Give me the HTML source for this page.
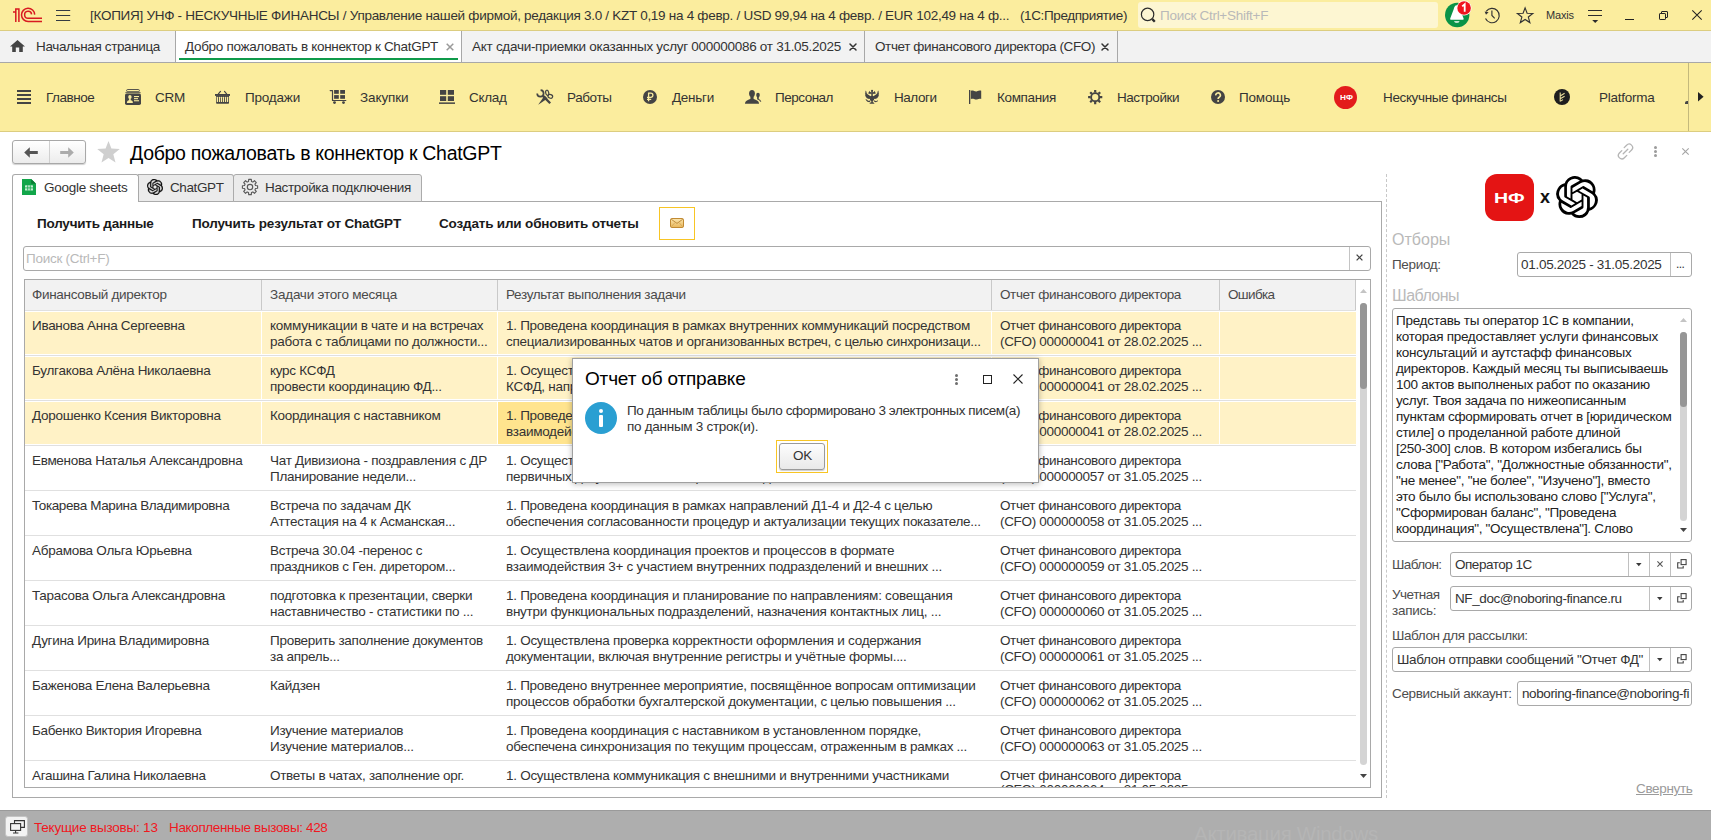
<!DOCTYPE html>
<html lang="ru">
<head>
<meta charset="utf-8">
<title>1C</title>
<style>
*{box-sizing:border-box;margin:0;padding:0}
html,body{width:1711px;height:840px;overflow:hidden;background:#fff}
body{font-family:"Liberation Sans",sans-serif;font-size:13.5px;letter-spacing:-0.28px;line-height:16px;color:#333;position:relative}
div,span{font-family:"Liberation Sans",sans-serif}
.abs{position:absolute}
.t{position:absolute;white-space:nowrap;line-height:16px;font-size:13.5px;letter-spacing:-0.28px;color:#333}
svg{position:absolute;overflow:visible}
#titlebar{left:0;top:0;width:1711px;height:31px;background:#fbed9e}
#tabbar{left:0;top:31px;width:1711px;height:32px;background:#f2f2f2;border-bottom:1px solid #a8a8a8;z-index:2}
#secbar{left:0;top:62px;width:1711px;height:70px;background:#fbed9e;border-bottom:1px solid #dccd80}
#bottombar{left:0;top:810px;width:1711px;height:30px;background:#aeaeae;border-top:1px solid #9a9a9a}
.tt{top:8px}
.tabx{position:absolute;top:0;width:1px;height:31px;background:#a8a8a8}
.tabt{top:8px}
.sec{top:28px}
.fld{position:absolute;border:1px solid #a9a9a9;border-radius:3px;background:#fff;height:24px}
.fld .d{position:absolute;top:0;bottom:0;width:1px;background:#c0c0c0}
.lbl{color:#4d4d4d}
.hdr{position:absolute;top:0;height:30px;background:#f2f2f2;border-right:1px solid #c9c9c9}
.hdr>span{position:absolute;left:8px;top:7px;white-space:nowrap;color:#4a4a4a}
.row{position:absolute;left:0;width:1331px;height:45px}
.cell{position:absolute;top:0;height:45px;overflow:hidden;white-space:nowrap;padding:7px 0 0 8px;line-height:16px;color:#333}
.sel .cell{background:#fff2c6;height:42px;top:1px;padding-top:6px}
.row.sel{border-top:1px solid #e0e0e0}

.row.n{border-top:1px solid #e0e0e0}
.row.n .cell{padding-top:7px}
</style>
</head>
<body>
<svg width="0" height="0" style="left:0;top:0"><defs><symbol id="oai" viewBox="0 0 24 24"><path d="M22.2819 9.8211a5.9847 5.9847 0 0 0-.5157-4.9108 6.0462 6.0462 0 0 0-6.5098-2.9A6.0651 6.0651 0 0 0 4.9807 4.1818a5.9847 5.9847 0 0 0-3.9977 2.9 6.0462 6.0462 0 0 0 .7427 7.0966 5.98 5.98 0 0 0 .511 4.9107 6.051 6.051 0 0 0 6.5146 2.9001A5.9847 5.9847 0 0 0 13.2599 24a6.0557 6.0557 0 0 0 5.7718-4.2058 5.9894 5.9894 0 0 0 3.9977-2.9001 6.0557 6.0557 0 0 0-.7475-7.0729zm-9.022 12.6081a4.4755 4.4755 0 0 1-2.8764-1.0408l.1419-.0804 4.7783-2.7582a.7948.7948 0 0 0 .3927-.6813v-6.7369l2.02 1.1686a.071.071 0 0 1 .038.052v5.5826a4.504 4.504 0 0 1-4.4945 4.4944zm-9.6607-4.1254a4.4708 4.4708 0 0 1-.5346-3.0137l.142.0852 4.783 2.7582a.7712.7712 0 0 0 .7806 0l5.8428-3.3685v2.3324a.0804.0804 0 0 1-.0332.0615L9.74 19.9502a4.4992 4.4992 0 0 1-6.1408-1.6464zM2.3408 7.8956a4.485 4.485 0 0 1 2.3655-1.9728V11.6a.7664.7664 0 0 0 .3879.6765l5.8144 3.3543-2.0201 1.1685a.0757.0757 0 0 1-.071 0l-4.8303-2.7865A4.504 4.504 0 0 1 2.3408 7.872zm16.5963 3.8558L13.1038 8.364 15.1192 7.2a.0757.0757 0 0 1 .071 0l4.8303 2.7913a4.4944 4.4944 0 0 1-.6765 8.1042v-5.6772a.79.79 0 0 0-.407-.667zm2.0107-3.0231l-.142-.0852-4.7735-2.7818a.7759.7759 0 0 0-.7854 0L9.409 9.2297V6.8974a.0662.0662 0 0 1 .0284-.0615l4.8303-2.7866a4.4992 4.4992 0 0 1 6.6802 4.66zM8.3065 12.863l-2.02-1.1638a.0804.0804 0 0 1-.038-.0567V6.0742a4.4992 4.4992 0 0 1 7.3757-3.4537l-.142.0805L8.704 5.459a.7948.7948 0 0 0-.3927.6813zm1.0976-2.3654l2.602-1.4998 2.6069 1.4998v2.9994l-2.5974 1.4997-2.6067-1.4997Z"/></symbol></defs></svg>
<!-- TITLE BAR -->
<div id="titlebar" class="abs">
  <svg style="left:0;top:0" width="80" height="31" viewBox="0 0 80 31"><g fill="none" stroke="#d81a21" stroke-width="1.5">
    <path d="M13 11.9 L15.8 11.9 M15.8 21.9 L15.8 8.9 L18.9 8.9 L18.9 21.9"/>
    <path d="M34.7 14.6 A6.6 6.6 0 1 0 28.2 21.5 L42 21.5"/>
    <path d="M31.6 14.4 A3.5 3.5 0 1 0 28.2 18.3 L42 18.3"/>
  </g>
  <g stroke="#343b42" stroke-width="1.2"><path d="M56 10.5 L70.2 10.5 M56 15.5 L70.2 15.5 M56 20.5 L70.2 20.5"/></g></svg>
  <div class="t tt" style="left:90px;letter-spacing:-0.279px">[КОПИЯ] УНФ - НЕСКУЧНЫЕ ФИНАНСЫ / Управление нашей фирмой, редакция 3.0 / KZT 0,19 на 4 февр. / USD 99,94 на 4 февр. / EUR 102,49 на 4 ф...</div>
  <div class="t tt" style="left:1020px;letter-spacing:-0.388px">(1С:Предприятие)</div>
  <div class="abs" style="left:1138px;top:2px;width:300px;height:26px;background:#fdf6d2;border-radius:3px"></div>
  <svg style="left:1136px;top:0" width="24" height="31" viewBox="1136 0 24 31"><circle cx="1147.6" cy="14.4" r="6.2" fill="none" stroke="#2c2c2c" stroke-width="1.2"/><path d="M1152.3 19.1 L1154.8 21.7" stroke="#2c2c2c" stroke-width="2.3" stroke-linecap="butt"/></svg>
  <div class="t tt" style="left:1160px;color:#b9b9b9">Поиск Ctrl+Shift+F</div>
  <!-- bell -->
  <svg style="left:1436px;top:0" width="110" height="31" viewBox="1436 0 110 31">
    <circle cx="1457.2" cy="15" r="12.2" fill="#0a9347"/>
    <path d="M1456.7 5.2 C1455 5.2 1454.2 7 1453.6 9.4 L1450.2 18.4 Q1449.8 19.7 1451 19.7 L1462.8 19.7 Q1464 19.7 1463.6 18.4 L1460.2 9.4 C1459.6 7 1458.4 5.2 1456.7 5.2 Z" fill="#fff"/>
    <path d="M1454 21.3 L1459.6 21.3 A2.9 2.1 0 0 1 1454 21.3 Z" fill="#fff"/>
    <circle cx="1464.1" cy="8" r="7.4" fill="#fff"/>
    <circle cx="1464.1" cy="8" r="6.8" fill="#f0141e"/>
    <path d="M1462.2 6.4 L1464.7 4.3 L1464.7 11.8" fill="none" stroke="#fff" stroke-width="1.8"/>
    <g fill="none" stroke="#333" stroke-width="1.15"><path d="M1486.2 11.3 A7.2 7.2 0 1 1 1485.5 18.6"/><path d="M1491.9 10.6 L1491.9 15.4 L1494.7 18.4"/></g>
    <path d="M1484.6 11.6 L1488.6 12.2 L1486 14.8 Z" fill="#333"/>
    <path d="M1525.10 7.90 L1527.10 13.25 L1532.80 13.50 L1528.33 17.05 L1529.86 22.55 L1525.10 19.40 L1520.34 22.55 L1521.87 17.05 L1517.40 13.50 L1523.10 13.25 Z" fill="none" stroke="#333" stroke-width="1.15"/>
  </svg>
  <div class="t" style="left:1546px;top:7px;font-size:11px;letter-spacing:-0.2px">Maxis</div>
  <!-- filter menu -->
  <div class="abs" style="left:1588px;top:10px;width:14px;height:1px;background:#2c2c2c"></div>
  <div class="abs" style="left:1588px;top:15px;width:14px;height:1px;background:#2c2c2c"></div>
  <svg style="left:1592px;top:20px" width="6.4" height="3" viewBox="0 0 8 4"><path d="M0 0 L8 0 L4 4z" fill="#2c2c2c"/></svg>
  <!-- min / restore / close -->
  <div class="abs" style="left:1625px;top:19px;width:9px;height:1px;background:#222"></div>
  <svg style="left:1659px;top:11px" width="9" height="9" viewBox="0 0 9 9"><g fill="none" stroke="#222" stroke-width="1"><rect x="0.5" y="2.5" width="6" height="6" rx="0.6"/><path d="M2.5 2.5 L2.5 1 Q2.5 0.5 3 0.5 L8 0.5 Q8.5 0.5 8.5 1 L8.5 6 Q8.5 6.5 8 6.5 L6.5 6.5"/></g></svg>
  <svg style="left:1692px;top:10px" width="10" height="10" viewBox="0 0 10 10"><path d="M0.3 0.3 L9.7 9.7 M9.7 0.3 L0.3 9.7" stroke="#222" stroke-width="1.05" fill="none"/></svg>
</div>

<div class="abs" style="left:0;top:30px;width:1711px;height:1px;background:#dccd80"></div>
<!-- TAB BAR -->
<div id="tabbar" class="abs">
  <svg style="left:10px;top:9px" width="15" height="12" viewBox="0 0 15 12"><path d="M7.5 0 L15 6.4 L12.8 6.4 L12.8 12 L9.2 12 L9.2 7.6 L5.8 7.6 L5.8 12 L2.2 12 L2.2 6.4 L0 6.4 Z" fill="#444"/></svg>
  <div class="t tabt" style="left:36px;letter-spacing:-0.368px">Начальная страница</div>
  <div class="tabx" style="left:175px"></div>
  <div class="abs" style="left:176px;top:0;width:285px;height:31px;background:#fff"></div>
  <div class="abs" style="left:179px;top:27px;width:279px;height:2px;background:#0f9a4a"></div>
  <div class="t tabt" style="left:185px;letter-spacing:-0.314px">Добро пожаловать в коннектор к ChatGPT</div>
  <svg style="left:446px;top:12px" width="8" height="8" viewBox="0 0 8 8"><path d="M0.7 0.7 L7.3 7.3 M7.3 0.7 L0.7 7.3" stroke="#9a9a9a" stroke-width="1.5"/></svg>
  <div class="tabx" style="left:461px"></div>
  <div class="t tabt" style="left:472px;letter-spacing:-0.278px">Акт сдачи-приемки оказанных услуг 000000086 от 31.05.2025</div>
  <svg style="left:849px;top:11.5px" width="8" height="8" viewBox="0 0 8 8"><path d="M1 1 L7 7 M7 1 L1 7" stroke="#333" stroke-width="1.5" stroke-linecap="round"/></svg>
  <div class="tabx" style="left:864px"></div>
  <div class="t tabt" style="left:875px;letter-spacing:-0.391px">Отчет финансового директора (CFO)</div>
  <svg style="left:1101px;top:11.5px" width="8" height="8" viewBox="0 0 8 8"><path d="M1 1 L7 7 M7 1 L1 7" stroke="#333" stroke-width="1.5" stroke-linecap="round"/></svg>
  <div class="tabx" style="left:1117px"></div>
</div>

<!-- SECTION BAR -->
<div id="secbar" class="abs">
  <!-- Главное -->
  <svg style="left:17px;top:28px" width="14" height="14" viewBox="0 0 14 14"><g fill="#444"><rect x="0" y="0" width="14" height="2"/><rect x="0" y="4" width="14" height="2"/><rect x="0" y="8" width="14" height="2"/><rect x="0" y="12" width="14" height="2"/></g></svg>
  <div class="t sec" style="left:46px;letter-spacing:-0.485px">Главное</div>
  <!-- CRM -->
  <svg style="left:125px;top:27px" width="16" height="16" viewBox="0 0 16 16"><g fill="none" stroke="#444"><rect x="1.6" y="0.5" width="12.8" height="2.2" rx="1.1" stroke-width="0.9"/><path d="M0.4 3.7 L15.6 3.7" stroke-width="0.9"/></g><rect x="0" y="4.4" width="16" height="11.6" rx="1.8" fill="#444"/><g fill="#fbed9e"><ellipse cx="4.9" cy="8" rx="1.7" ry="2.1"/><rect x="4.1" y="9.4" width="1.6" height="2"/><path d="M1.9 14 C1.9 12 3.2 11.1 4.9 11.1 C6.6 11.1 7.9 12 7.9 14 Z"/><rect x="9" y="7" width="5" height="1.1"/><rect x="9" y="9.1" width="4" height="1.1"/><rect x="9" y="11.2" width="5" height="1.1"/></g></svg>
  <div class="t sec" style="left:155px;letter-spacing:-0.250px">CRM</div>
  <!-- Продажи -->
  <svg style="left:208px;top:22px" width="30" height="26" viewBox="208 84 30 26"><g fill="none" stroke="#444" stroke-width="1.2" stroke-linecap="round"><path d="M218.4 93.8 L220.5 91.4 M226.6 93.8 L224.5 91.4"/></g><g fill="#444"><rect x="215" y="94" width="15" height="1.9"/><path d="M216.1 95.5 L229 95.5 L229 103 Q229 103.8 228.2 103.8 L216.9 103.8 Q216.1 103.8 216.1 103 Z"/></g><g fill="#fbed9e"><rect x="216.8" y="96.8" width="1.2" height="5.3" rx="0.5"/><rect x="218.9" y="96.8" width="1.2" height="5.3" rx="0.5"/><rect x="220.9" y="96.8" width="1.2" height="5.3" rx="0.5"/><rect x="222.9" y="96.8" width="1.2" height="5.3" rx="0.5"/><rect x="225.0" y="96.8" width="1.2" height="5.3" rx="0.5"/><rect x="227.0" y="96.8" width="1.2" height="5.3" rx="0.5"/></g></svg>
  <div class="t sec" style="left:245px;letter-spacing:-0.199px">Продажи</div>
  <!-- Закупки -->
  <svg style="left:323px;top:22px" width="30" height="26" viewBox="323 84 30 26"><path d="M330.2 90.6 L332.5 90.6 L332.5 100.5 L345.8 100.5" fill="none" stroke="#444" stroke-width="1.2" stroke-linecap="round" stroke-linejoin="round"/><g fill="#444"><rect x="334.1" y="90" width="4.7" height="3.8"/><rect x="340.2" y="90" width="4.8" height="3.8"/><rect x="334.1" y="95.1" width="4.7" height="3.7"/><rect x="340.2" y="95.1" width="4.8" height="3.7"/><circle cx="334.5" cy="102.6" r="1.4"/><circle cx="343.5" cy="102.6" r="1.4"/></g></svg>
  <div class="t sec" style="left:360px;letter-spacing:-0.105px">Закупки</div>
  <!-- Склад -->
  <svg style="left:439px;top:28px" width="16" height="14" viewBox="0 0 16 14"><g fill="#444"><rect x="1" y="0" width="6.2" height="4.8"/><rect x="8.8" y="0" width="6.2" height="4.8"/><rect x="1" y="6.2" width="6.2" height="4.8"/><rect x="8.8" y="6.2" width="6.2" height="4.8"/><rect x="0" y="12.4" width="16" height="1.5"/></g></svg>
  <div class="t sec" style="left:469px;letter-spacing:-0.316px">Склад</div>
  <!-- Работы -->
  <svg style="left:530px;top:22px" width="30" height="26" viewBox="530 84 30 26"><g fill="none" stroke="#444"><path d="M537.2 93.4 A3.2 3.2 0 1 0 540.6 90.2" stroke-width="1.7"/><path d="M542.9 95.9 L550.2 103.2" stroke-width="2.3"/><ellipse cx="547.2" cy="92.8" rx="1.5" ry="2.6" stroke-width="1.2" transform="rotate(-12 547.2 92.8)"/><ellipse cx="550.3" cy="96.3" rx="2.4" ry="1.8" stroke-width="1.2" transform="rotate(20 550.3 96.3)"/></g><path d="M544.6 95.6 L547.5 98.4 L538.2 104.8 Z" fill="#444"/></svg>
  <div class="t sec" style="left:567px;letter-spacing:-0.401px">Работы</div>
  <!-- Деньги -->
  <svg style="left:643px;top:28px" width="14" height="14" viewBox="0 0 14 14"><circle cx="7" cy="7" r="7" fill="#444"/><g fill="none" stroke="#fbed9e" stroke-width="1.3"><path d="M5.6 11.2 L5.6 3.2 L7.8 3.2 A2.1 2.1 0 0 1 7.8 7.4 L4 7.4 M4 9.4 L8.2 9.4"/></g></svg>
  <div class="t sec" style="left:672px;letter-spacing:-0.268px">Деньги</div>
  <!-- Персонал -->
  <svg style="left:738px;top:22px" width="30" height="26" viewBox="738 84 30 26"><g fill="#444"><ellipse cx="752" cy="93.4" rx="2.9" ry="3.5"/><rect x="750.4" y="95.5" width="3.2" height="4.5"/><path d="M745 103.8 C745 101 747.5 99.9 750.6 99 L753.4 99 C756.5 99.9 759 101 759 103.8 Z"/><ellipse cx="758" cy="95.1" rx="1.8" ry="2.3"/><rect x="757.1" y="96.5" width="1.7" height="2.4"/></g><path d="M757.2 98.7 C759 99.3 760.4 100.2 760.8 101.7" fill="none" stroke="#444" stroke-width="1.2"/></svg>
  <div class="t sec" style="left:775px;letter-spacing:-0.498px">Персонал</div>
  <!-- Налоги -->
  <svg style="left:857px;top:22px" width="30" height="26" viewBox="0 0 30 26"><g fill="#444"><path d="M8.4 6.6 L9.4 7.4 L9.7 9.2 L10.9 10.4 L12.2 11.2 L13.6 12.6 L14.0 14.6 L12.0 15.0 L9.9 14.2 L8.6 12.4 L8.0 10.8 L8.6 10.2 L7.9 9.0 L8.5 8.4 Z M21.6 6.6 L20.6 7.4 L20.3 9.2 L19.1 10.4 L17.8 11.2 L16.4 12.6 L16.0 14.6 L18.0 15.0 L20.1 14.2 L21.4 12.4 L22.0 10.8 L21.4 10.2 L22.1 9.0 L21.5 8.4 Z M11.4 9.4 L12.3 6.7 L13.2 8.3 L14.0 8.3 L14.0 9.4 Z M18.6 9.4 L17.7 6.7 L16.8 8.3 L16.0 8.3 L16.0 9.4 Z M8.4 15.2 L9.8 15.4 L10.8 16.6 L12.2 17.0 L13.0 16.0 L13.6 16.8 L12.6 18.2 L10.4 17.8 L9.2 16.6 Z M16.8 16.0 L17.8 16.8 L19.4 17.2 L20.4 16.2 L20.8 16.2 L20.4 17.8 L18.6 18.2 L17.0 17.4 Z"/><rect x="14.1" y="5.9" width="1.9" height="1.6"/><rect x="14.3" y="7" width="1.5" height="12"/><rect x="11.6" y="8.6" width="6.8" height="1"/><path d="M13.2 12 L16.8 12 L17 15.5 L16 17 L14 17 L13 15.5 Z"/><path d="M12.4 19.8 L13.6 18.2 L16.4 18.2 L17.6 19.8 Z"/></g></svg>
  <div class="t sec" style="left:894px;letter-spacing:-0.461px">Налоги</div>
  <!-- Компания -->
  <svg style="left:969px;top:28px" width="13" height="14" viewBox="0 0 13 14"><rect x="0" y="0" width="1.3" height="14" fill="#444"/><path d="M1.8 0.9 C4 -0.2 6 2 8 1.2 C9.6 0.6 11 0.2 12.2 0.8 L12.2 9 C11 8.4 9.6 8.8 8 9.4 C6 10.2 4 8 1.8 9.2 Z" fill="#444"/></svg>
  <div class="t sec" style="left:997px;letter-spacing:-0.348px">Компания</div>
  <!-- Настройки -->
  <svg style="left:1088px;top:28px" width="14.4" height="14.4" viewBox="-7.2 -7.2 14.4 14.4"><circle r="4.1" fill="none" stroke="#444" stroke-width="1.9"/><g stroke="#444" stroke-width="2.2"><path d="M0 -7.1 L0 -4.6 M0 7.1 L0 4.6 M-7.1 0 L-4.6 0 M7.1 0 L4.6 0 M-5 -5 L-3.3 -3.3 M5 5 L3.3 3.3 M-5 5 L-3.3 3.3 M5 -5 L3.3 -3.3"/></g></svg>
  <div class="t sec" style="left:1117px;letter-spacing:-0.467px">Настройки</div>
  <!-- Помощь -->
  <svg style="left:1211px;top:28px" width="14" height="14" viewBox="0 0 14 14"><circle cx="7" cy="7" r="7" fill="#444"/><path d="M4.8 5.4 A2.3 2.3 0 1 1 8.2 7.2 C7.4 7.7 7.1 8 7.1 8.9" fill="none" stroke="#fbed9e" stroke-width="1.6"/><circle cx="7.1" cy="11" r="1" fill="#fbed9e"/></svg>
  <div class="t sec" style="left:1239px;letter-spacing:-0.193px">Помощь</div>
  <!-- НФ -->
  <div class="abs" style="left:1334px;top:24px;width:23px;height:23px;border-radius:50%;background:#e31b1b"></div>
  <div class="t" style="left:1339.5px;top:31px;font-size:6.8px;line-height:10px;font-weight:bold;color:#fff;letter-spacing:0;transform:scaleX(1.2);transform-origin:0 0">НФ</div>
  <div class="t sec" style="left:1383px;letter-spacing:-0.370px">Нескучные финансы</div>
  <!-- Platforma -->
  <svg style="left:1554px;top:27px" width="16" height="16" viewBox="0 0 16 16"><circle cx="8" cy="8" r="8" fill="#1e1e1e"/><g stroke="#e8dc9a" stroke-width="1.1" fill="none"><path d="M6.2 12.4 L6.2 3.6 M6.2 7 L10.6 4.2 M6.2 9.8 L10.6 7.2 M6.2 12.4 L9 10.6"/></g></svg>
  <div class="t sec" style="left:1599px;letter-spacing:-0.253px">Platforma</div>
  <div class="abs" style="left:1685px;top:39px;width:3px;height:3px;background:#444;border-radius:2px 0 0 0"></div>
  <div class="abs" style="left:1688px;top:0;width:1px;height:69px;background:#c4b97c"></div>
  <svg style="left:1698px;top:30px" width="6" height="10" viewBox="0 0 6 10"><path d="M0 0 L5.6 4.8 L0 9.6 Z" fill="#222"/></svg>
</div>

<!-- MAIN HEADER -->
<div class="abs" style="left:12px;top:140px;width:74px;height:24px;border:1px solid #a8a8a8;border-radius:3px;background:linear-gradient(#ffffff,#ececec);box-shadow:0 1px 1px rgba(0,0,0,0.18)"></div>
<div class="abs" style="left:49px;top:141px;width:1px;height:22px;background:#d0d0d0"></div>
<svg style="left:24px;top:147px" width="14" height="11" viewBox="0 0 14 11"><path d="M0.2 5.4 L5.8 0.2 L5.8 4 L13.8 4 L13.8 6.9 L5.8 6.9 L5.8 10.7 Z" fill="#555"/></svg>
<svg style="left:60px;top:147px" width="14" height="11" viewBox="0 0 14 11"><path d="M13.8 5.4 L8.2 0.2 L8.2 4 L0.2 4 L0.2 6.9 L8.2 6.9 L8.2 10.7 Z" fill="#ababab"/></svg>
<svg style="left:97px;top:141px" width="23" height="22" viewBox="0 0 23 22"><path d="M11.5 0 L14.4 7.6 L22.8 8.1 L16.3 13.3 L18.5 21.6 L11.5 17 L4.5 21.6 L6.7 13.3 L0.2 8.1 L8.6 7.6 Z" fill="#cfcfcf"/></svg>
<div class="t" style="left:130px;top:141px;font-size:19.5px;line-height:24px;color:#000;letter-spacing:-0.294px">Добро пожаловать в коннектор к ChatGPT</div>
<!-- top-right icons -->
<svg style="left:1617px;top:143px" width="17" height="17" viewBox="0 0 17 17"><g fill="none" stroke="#b5b5b5" stroke-width="1.3" stroke-linecap="round"><path d="M7.2 4.6 L9.6 2.2 A3.4 3.4 0 0 1 14.6 7 L12.2 9.4"/><path d="M9.8 12.4 L7.4 14.8 A3.4 3.4 0 0 1 2.4 10 L4.8 7.6"/><path d="M6.2 10.8 L10.8 6.2"/></g></svg>
<div class="abs" style="left:1654px;top:146px;width:3px;height:3px;border-radius:2px;background:#9c9c9c"></div>
<div class="abs" style="left:1654px;top:150px;width:3px;height:3px;border-radius:2px;background:#9c9c9c"></div>
<div class="abs" style="left:1654px;top:154px;width:3px;height:3px;border-radius:2px;background:#9c9c9c"></div>
<svg style="left:1682px;top:148px" width="7" height="7" viewBox="0 0 7 7"><path d="M0.3 0.3 L6.7 6.7 M6.7 0.3 L0.3 6.7" stroke="#a4a4a4" stroke-width="1.1"/></svg>

<!-- INNER TABS -->
<div class="abs" style="left:12px;top:201px;width:1370px;height:597px;border:1px solid #a9a9a9;background:#fff"></div>
<div class="abs" style="left:138px;top:174px;width:96px;height:28px;border:1px solid #ababab;border-left:none;border-radius:0 3px 0 0;background:#ebebeb"></div>
<div class="abs" style="left:233px;top:174px;width:189px;height:28px;border:1px solid #ababab;border-radius:3px 3px 0 0;background:#ebebeb"></div>
<div class="abs" style="left:12px;top:174px;width:127px;height:28px;border:1px solid #a9a9a9;border-bottom:none;border-radius:3px 3px 0 0;background:#fff"></div>
<!-- google sheets icon -->
<svg style="left:22px;top:179px" width="14" height="16" viewBox="0 0 14 16"><path d="M0 0 L9.2 0 L14 4.8 L14 16 L0 16 Z" fill="#12a64a"/><path d="M9.2 0 L14 4.8 L9.2 4.8 Z" fill="#0a7a34"/><rect x="3" y="6.2" width="8" height="5.4" rx="0.6" fill="#c4ecd2"/><g stroke="#12a64a" stroke-width="0.8"><path d="M3 8.9 L11 8.9 M5.7 6.2 L5.7 11.6 M8.3 6.2 L8.3 11.6"/></g></svg>
<div class="t" style="left:44px;top:180px;letter-spacing:-0.274px">Google sheets</div>
<!-- chatgpt small icon -->
<svg style="left:147px;top:179px" width="16" height="16" viewBox="0 0 24 24"><use href="#oai" fill="#111" stroke="#111" stroke-width="0.5"/></svg>
<div class="t" style="left:170px;top:180px;letter-spacing:-0.397px">ChatGPT</div>
<!-- settings outline gear -->
<svg style="left:242px;top:179px" width="16" height="16" viewBox="-8 -8 16 16"><g fill="none" stroke="#5a5a5a" stroke-width="1.15" stroke-linejoin="round"><circle r="2.7"/><path d="M-1.47 -5.51 L-1.30 -7.59 L1.30 -7.59 L1.47 -5.51 L2.86 -4.93 L4.45 -6.29 L6.29 -4.45 L4.93 -2.86 L5.51 -1.47 L7.59 -1.30 L7.59 1.30 L5.51 1.47 L4.93 2.86 L6.29 4.45 L4.45 6.29 L2.86 4.93 L1.47 5.51 L1.30 7.59 L-1.30 7.59 L-1.47 5.51 L-2.86 4.93 L-4.45 6.29 L-6.29 4.45 L-4.93 2.86 L-5.51 1.47 L-7.59 1.30 L-7.59 -1.30 L-5.51 -1.47 L-4.93 -2.86 L-6.29 -4.45 L-4.45 -6.29 L-2.86 -4.93 Z"/></g></svg>
<div class="t" style="left:265px;top:180px;letter-spacing:-0.344px">Настройка подключения</div>

<!-- COMMAND BAR -->
<div class="t" style="left:37px;top:216px;font-weight:bold;color:#1a1a1a;letter-spacing:-0.217px">Получить данные</div>
<div class="t" style="left:192px;top:216px;font-weight:bold;color:#1a1a1a;letter-spacing:-0.172px">Получить результат от ChatGPT</div>
<div class="t" style="left:439px;top:216px;font-weight:bold;color:#1a1a1a;letter-spacing:-0.177px">Создать или обновить отчеты</div>
<div class="abs" style="left:659px;top:207px;width:36px;height:33px;border:1px solid #f8c524;background:#fff"></div>
<svg style="left:670px;top:218px" width="14" height="10" viewBox="0 0 14 10"><defs><linearGradient id="env" x1="0" y1="0" x2="0" y2="1"><stop offset="0" stop-color="#fbe6ae"/><stop offset="1" stop-color="#e9b75c"/></linearGradient></defs><rect x="0.5" y="0.5" width="13" height="9" rx="1.3" fill="url(#env)" stroke="#c18a33" stroke-width="1"/><path d="M1.2 1.2 L7 5.4 L12.8 1.2" fill="none" stroke="#b98434" stroke-width="0.9"/><path d="M1.2 8.8 L5 4.6 M12.8 8.8 L9 4.6" fill="none" stroke="#cfa050" stroke-width="0.7"/></svg>

<!-- SEARCH -->
<div class="abs" style="left:23px;top:246px;width:1348px;height:25px;border:1px solid #a9a9a9;border-radius:3px;background:#fff"></div>
<div class="abs" style="left:1349px;top:247px;width:1px;height:23px;background:#c4c4c4"></div>
<div class="t" style="left:26px;top:251px;color:#b9b9b9">Поиск (Ctrl+F)</div>
<svg style="left:1356px;top:254px" width="7" height="7" viewBox="0 0 7 7"><path d="M0.6 0.6 L6.4 6.4 M6.4 0.6 L0.6 6.4" stroke="#444" stroke-width="1.3"/></svg>
<!-- TABLE -->
<div class="abs" style="left:24px;top:279px;width:1347px;height:509px;border:1px solid #a9a9a9;background:#fff;overflow:hidden">
<div class="abs" style="left:0;top:0;width:1345px;height:30px;background:#f2f2f2"></div>
<div class="hdr" style="left:0px;width:237px"><span style="left:7px"><span class="f" style="letter-spacing:-0.297px">Финансовый директор</span></span></div>
<div class="hdr" style="left:237px;width:236px"><span><span class="f" style="letter-spacing:-0.220px">Задачи этого месяца</span></span></div>
<div class="hdr" style="left:473px;width:494px"><span><span class="f" style="letter-spacing:-0.338px">Результат выполнения задачи</span></span></div>
<div class="hdr" style="left:967px;width:228px"><span><span class="f" style="letter-spacing:-0.395px">Отчет финансового директора</span></span></div>
<div class="hdr" style="left:1195px;width:136px"><span><span class="f" style="letter-spacing:-0.638px">Ошибка</span></span></div>
<div class="row sel first" style="top:30px">
<div class="cell" style="left:0px;width:236px;padding-left:7px"><span class="f" style="letter-spacing:-0.296px">Иванова Анна Сергеевна</span></div>
<div class="cell" style="left:237px;width:235px">коммуникации в чате и на встречах<br>работа с таблицами по должности...</div>
<div class="cell" style="left:473px;width:493px">1. Проведена координация в рамках внутренних коммуникаций посредством<br>специализированных чатов и организованных встреч, с целью синхронизаци...</div>
<div class="cell" style="left:967px;width:227px"><span class="f" style="letter-spacing:-0.395px">Отчет финансового директора</span><br><span class="f" style="letter-spacing:-0.312px">(CFO) 000000041 от 28.02.2025 ...</span></div>
<div class="cell" style="left:1195px;width:136px"></div>
</div>
<div class="row sel" style="top:75px">
<div class="cell" style="left:0px;width:236px;padding-left:7px"><span class="f" style="letter-spacing:-0.272px">Булгакова Алёна Николаевна</span></div>
<div class="cell" style="left:237px;width:235px">курс КСФД<br>провести координацию ФД...</div>
<div class="cell" style="left:473px;width:493px">1. Осуществлена координация прохождения курса<br>КСФД, направленная на повышение квалификации ...</div>
<div class="cell" style="left:967px;width:227px"><span class="f" style="letter-spacing:-0.395px">Отчет финансового директора</span><br><span class="f" style="letter-spacing:-0.312px">(CFO) 000000041 от 28.02.2025 ...</span></div>
<div class="cell" style="left:1195px;width:136px"></div>
</div>
<div class="row sel" style="top:120px">
<div class="cell" style="left:0px;width:236px;padding-left:7px"><span class="f" style="letter-spacing:-0.285px">Дорошенко Ксения Викторовна</span></div>
<div class="cell" style="left:237px;width:235px">Координация с наставником</div>
<div class="cell" style="left:473px;width:493px;background:#ffe48e">1. Проведена координация с наставником в формате<br>взаимодействия по текущим вопросам и задачам ...</div>
<div class="cell" style="left:967px;width:227px"><span class="f" style="letter-spacing:-0.395px">Отчет финансового директора</span><br><span class="f" style="letter-spacing:-0.312px">(CFO) 000000041 от 28.02.2025 ...</span></div>
<div class="cell" style="left:1195px;width:136px"></div>
</div>
<div class="row n" style="top:165px">
<div class="cell" style="left:0px;width:237px;padding-left:7px"><span class="f" style="letter-spacing:-0.311px">Евменова Наталья Александровна</span></div>
<div class="cell" style="left:237px;width:236px">Чат Дивизиона - поздравления с ДР<br>Планирование недели...</div>
<div class="cell" style="left:473px;width:494px">1. Осуществлена координация внутренних<br>первичных документов и планирования недели ...</div>
<div class="cell" style="left:967px;width:228px"><span class="f" style="letter-spacing:-0.395px">Отчет финансового директора</span><br><span class="f" style="letter-spacing:-0.312px">(CFO) 000000057 от 31.05.2025 ...</span></div>
<div class="cell" style="left:1195px;width:136px"></div>
</div>
<div class="row n" style="top:210px">
<div class="cell" style="left:0px;width:237px;padding-left:7px"><span class="f" style="letter-spacing:-0.388px">Токарева Марина Владимировна</span></div>
<div class="cell" style="left:237px;width:236px">Встреча по задачам ДК<br>Аттестация на 4 к Асманская...</div>
<div class="cell" style="left:473px;width:494px">1. Проведена координация в рамках направлений Д1-4 и Д2-4 с целью<br>обеспечения согласованности процедур и актуализации текущих показателе...</div>
<div class="cell" style="left:967px;width:228px"><span class="f" style="letter-spacing:-0.395px">Отчет финансового директора</span><br><span class="f" style="letter-spacing:-0.312px">(CFO) 000000058 от 31.05.2025 ...</span></div>
<div class="cell" style="left:1195px;width:136px"></div>
</div>
<div class="row n" style="top:255px">
<div class="cell" style="left:0px;width:237px;padding-left:7px"><span class="f" style="letter-spacing:-0.277px">Абрамова Ольга Юрьевна</span></div>
<div class="cell" style="left:237px;width:236px">Встреча 30.04 -перенос с<br>праздников с Ген. диретором...</div>
<div class="cell" style="left:473px;width:494px">1. Осуществлена координация проектов и процессов в формате<br>взаимодействия 3+ с участием внутренних подразделений и внешних ...</div>
<div class="cell" style="left:967px;width:228px"><span class="f" style="letter-spacing:-0.395px">Отчет финансового директора</span><br><span class="f" style="letter-spacing:-0.312px">(CFO) 000000059 от 31.05.2025 ...</span></div>
<div class="cell" style="left:1195px;width:136px"></div>
</div>
<div class="row n" style="top:300px">
<div class="cell" style="left:0px;width:237px;padding-left:7px"><span class="f" style="letter-spacing:-0.293px">Тарасова Ольга Александровна</span></div>
<div class="cell" style="left:237px;width:236px">подготовка к презентации, сверки<br>наставничество - статистики по ...</div>
<div class="cell" style="left:473px;width:494px">1. Проведена координация и планирование по направлениям: совещания<br>внутри функциональных подразделений, назначения контактных лиц, ...</div>
<div class="cell" style="left:967px;width:228px"><span class="f" style="letter-spacing:-0.395px">Отчет финансового директора</span><br><span class="f" style="letter-spacing:-0.312px">(CFO) 000000060 от 31.05.2025 ...</span></div>
<div class="cell" style="left:1195px;width:136px"></div>
</div>
<div class="row n" style="top:345px">
<div class="cell" style="left:0px;width:237px;padding-left:7px"><span class="f" style="letter-spacing:-0.305px">Дугина Ирина Владимировна</span></div>
<div class="cell" style="left:237px;width:236px">Проверить заполнение документов<br>за апрель...</div>
<div class="cell" style="left:473px;width:494px">1. Осуществлена проверка корректности оформления и содержания<br>документации, включая внутренние регистры и учётные формы....</div>
<div class="cell" style="left:967px;width:228px"><span class="f" style="letter-spacing:-0.395px">Отчет финансового директора</span><br><span class="f" style="letter-spacing:-0.312px">(CFO) 000000061 от 31.05.2025 ...</span></div>
<div class="cell" style="left:1195px;width:136px"></div>
</div>
<div class="row n" style="top:390px">
<div class="cell" style="left:0px;width:237px;padding-left:7px"><span class="f" style="letter-spacing:-0.306px">Баженова Елена Валерьевна</span></div>
<div class="cell" style="left:237px;width:236px">Кайдзен</div>
<div class="cell" style="left:473px;width:494px">1. Проведено внутреннее мероприятие, посвящённое вопросам оптимизации<br>процессов обработки бухгалтерской документации, с целью повышения ...</div>
<div class="cell" style="left:967px;width:228px"><span class="f" style="letter-spacing:-0.395px">Отчет финансового директора</span><br><span class="f" style="letter-spacing:-0.312px">(CFO) 000000062 от 31.05.2025 ...</span></div>
<div class="cell" style="left:1195px;width:136px"></div>
</div>
<div class="row n" style="top:435px">
<div class="cell" style="left:0px;width:237px;padding-left:7px"><span class="f" style="letter-spacing:-0.319px">Бабенко Виктория Игоревна</span></div>
<div class="cell" style="left:237px;width:236px">Изучение материалов<br>Изучение материалов...</div>
<div class="cell" style="left:473px;width:494px">1. Проведена координация с наставником в установленном порядке,<br>обеспечена синхронизация по текущим процессам, отраженным в рамках ...</div>
<div class="cell" style="left:967px;width:228px"><span class="f" style="letter-spacing:-0.395px">Отчет финансового директора</span><br><span class="f" style="letter-spacing:-0.312px">(CFO) 000000063 от 31.05.2025 ...</span></div>
<div class="cell" style="left:1195px;width:136px"></div>
</div>
<div class="row n" style="top:480px">
<div class="cell" style="left:0px;width:237px;padding-left:7px"><span class="f" style="letter-spacing:-0.337px">Агашина Галина Николаевна</span></div>
<div class="cell" style="left:237px;width:236px">Ответы в чатах, заполнение орг.</div>
<div class="cell" style="left:473px;width:494px">1. Осуществлена коммуникация с внешними и внутренними участниками</div>
<div class="cell" style="left:967px;width:228px"><span class="f" style="letter-spacing:-0.395px">Отчет финансового директора</span><br><span style="position:relative;top:-2px"><span class="f" style="letter-spacing:-0.312px">(CFO) 000000064 от 31.05.2025 ...</span></span></div>
<div class="cell" style="left:1195px;width:136px"></div>
</div>
<div class="abs" style="left:1331px;top:0;width:14px;height:507px;background:#fff"></div>
<svg style="left:1335px;top:9px" width="7" height="4" viewBox="0 0 7 4"><path d="M0 4 L3.5 0 L7 4 Z" fill="#c4c4c4"/></svg>
<div class="abs" style="left:1335px;top:23px;width:7px;height:462px;border-radius:4px;background:#d4d4d4"></div>
<div class="abs" style="left:1335px;top:23px;width:7px;height:86px;border-radius:4px;background:#969696"></div>
<svg style="left:1335px;top:494px" width="7" height="4" viewBox="0 0 7 4"><path d="M0 0 L3.5 4 L7 0 Z" fill="#444"/></svg>
</div><div class="abs" style="left:1386px;top:174px;width:0;height:624px;border-left:1px dashed #c8c8c8"></div>
<div class="abs" style="left:1485px;top:174px;width:49px;height:47px;border-radius:12px;background:#e41414"></div>
<div class="t" style="left:1494px;top:187px;font-size:15.5px;line-height:22px;font-weight:bold;color:#fff;letter-spacing:0;transform:scaleX(1.26);transform-origin:0 0">НФ</div>
<div class="t" style="left:1540px;top:186px;font-size:18px;line-height:22px;font-weight:bold;color:#111">x</div>
<svg style="left:1556px;top:176px" width="42" height="42" viewBox="0 0 24 24"><use href="#oai" fill="#000"/></svg>
<div class="t" style="left:1392px;top:230px;font-size:16px;line-height:20px;color:#b9b9b9;letter-spacing:0.028px">Отборы</div>
<div class="t lbl" style="left:1392px;top:257px;letter-spacing:-0.330px">Период:</div>
<div class="fld" style="left:1517px;top:252px;width:175px;height:25px"><div class="d" style="left:152px"></div><div class="t" style="left:3px;top:4px;letter-spacing:-0.284px">01.05.2025 - 31.05.2025</div><div class="t" style="left:158px;top:3px;letter-spacing:-0.6px;font-size:12px">...</div></div>
<div class="t" style="left:1392px;top:286px;font-size:16px;line-height:20px;color:#b9b9b9;letter-spacing:-0.538px">Шаблоны</div>
<div class="abs" style="left:1392px;top:308px;width:300px;height:234px;border:1px solid #a9a9a9;border-radius:3px;background:#fff;overflow:hidden">
<div class="t" style="left:3px;top:4px;color:#222">Представь ты оператор 1С в компании,</div>
<div class="t" style="left:3px;top:20px;color:#222">которая предоставляет услуги финансовых</div>
<div class="t" style="left:3px;top:36px;color:#222">консультаций и аутстафф финансовых</div>
<div class="t" style="left:3px;top:52px;color:#222">директоров. Каждый месяц ты выписываешь</div>
<div class="t" style="left:3px;top:68px;color:#222">100 актов выполненых работ по оказанию</div>
<div class="t" style="left:3px;top:84px;color:#222">услуг. Твоя задача по нижеописанным</div>
<div class="t" style="left:3px;top:100px;color:#222">пунктам сформировать отчет в [юридическом</div>
<div class="t" style="left:3px;top:116px;color:#222">стиле] о проделанной работе длиной</div>
<div class="t" style="left:3px;top:132px;color:#222">[250-300] слов. В котором избегались бы</div>
<div class="t" style="left:3px;top:148px;color:#222">слова ["Работа", "Должностные обязанности",</div>
<div class="t" style="left:3px;top:164px;color:#222">"не менее", "не более", "Изучено"], вместо</div>
<div class="t" style="left:3px;top:180px;color:#222">это было бы использовано слово ["Услуга",</div>
<div class="t" style="left:3px;top:196px;color:#222">"Сформирован баланс", "Проведена</div>
<div class="t" style="left:3px;top:212px;color:#222">координация", "Осуществлена"]. Слово</div>
<svg style="left:287px;top:9px" width="7" height="4" viewBox="0 0 7 4"><path d="M0 4 L3.5 0 L7 4 Z" fill="#c4c4c4"/></svg>
<div class="abs" style="left:287px;top:23px;width:7px;height:189px;border-radius:4px;background:#d4d4d4"></div>
<div class="abs" style="left:287px;top:23px;width:7px;height:75px;border-radius:4px;background:#969696"></div>
<svg style="left:287px;top:219px" width="7" height="4" viewBox="0 0 7 4"><path d="M0 0 L3.5 4 L7 0 Z" fill="#444"/></svg>
</div>
<div class="t lbl" style="left:1392px;top:557px;letter-spacing:-0.621px">Шаблон:</div>
<div class="fld" style="left:1450px;top:552px;width:242px;height:25px"><div class="d" style="left:177px"></div><div class="d" style="left:198px"></div><div class="d" style="left:219px"></div><div class="t" style="left:4px;top:4px;letter-spacing:-0.474px">Оператор 1С</div><svg style="left:184.6px;top:9.6px" width="5.6" height="3.2" viewBox="0 0 7 4"><path d="M0 0 L7 0 L3.5 4 Z" fill="#3a3a3a"/></svg><svg style="left:206px;top:8.4px" width="6" height="6" viewBox="0 0 6 6"><path d="M0.4 0.4 L5.6 5.6 M5.6 0.4 L0.4 5.6" stroke="#555" stroke-width="1.1"/></svg><svg style="right:4px;top:6px" width="10" height="10" viewBox="0 0 10 10"><g fill="none" stroke="#444" stroke-width="1.1"><rect x="4.1" y="0.6" width="5" height="5"/><path d="M2.8 3.7 L0.7 3.7 L0.7 9 L6.2 9 L6.2 6.9"/></g></svg></div>
<div class="t lbl" style="left:1392px;top:587px;letter-spacing:-0.506px">Учетная</div>
<div class="t lbl" style="left:1392px;top:603px;letter-spacing:-0.271px">запись:</div>
<div class="fld" style="left:1450px;top:586px;width:242px;height:25px"><div class="d" style="left:198px"></div><div class="d" style="left:219px"></div><div class="t" style="left:4px;top:4px;letter-spacing:-0.408px">NF_doc@noboring-finance.ru</div><svg style="left:205.6px;top:9.6px" width="5.6" height="3.2" viewBox="0 0 7 4"><path d="M0 0 L7 0 L3.5 4 Z" fill="#3a3a3a"/></svg><svg style="right:4px;top:6px" width="10" height="10" viewBox="0 0 10 10"><g fill="none" stroke="#444" stroke-width="1.1"><rect x="4.1" y="0.6" width="5" height="5"/><path d="M2.8 3.7 L0.7 3.7 L0.7 9 L6.2 9 L6.2 6.9"/></g></svg></div>
<div class="t lbl" style="left:1392px;top:628px;letter-spacing:-0.413px">Шаблон для рассылки:</div>
<div class="fld" style="left:1392px;top:647px;width:300px;height:25px"><div class="d" style="left:256px"></div><div class="d" style="left:277px"></div><div class="t" style="left:4px;top:4px;letter-spacing:-0.319px">Шаблон отправки сообщений "Отчет ФД"</div><svg style="left:263.6px;top:9.6px" width="5.6" height="3.2" viewBox="0 0 7 4"><path d="M0 0 L7 0 L3.5 4 Z" fill="#3a3a3a"/></svg><svg style="right:4px;top:6px" width="10" height="10" viewBox="0 0 10 10"><g fill="none" stroke="#444" stroke-width="1.1"><rect x="4.1" y="0.6" width="5" height="5"/><path d="M2.8 3.7 L0.7 3.7 L0.7 9 L6.2 9 L6.2 6.9"/></g></svg></div>
<div class="t lbl" style="left:1392px;top:686px;letter-spacing:-0.339px">Сервисный аккаунт:</div>
<div class="fld" style="left:1517px;top:681px;width:175px;height:25px;overflow:hidden"><div class="t" style="left:4px;top:4px;letter-spacing:-0.392px">noboring-finance@noboring-fi</div></div>
<div class="t" style="left:1636px;top:781px;color:#9a9a9a;text-decoration:underline;letter-spacing:-0.352px">Свернуть</div>
<!-- DIALOG -->
<div class="abs" style="left:572px;top:358px;width:467px;height:125px;border:1px solid #a0a0a0;background:#fff;box-shadow:0 1px 6px rgba(0,0,0,0.28)"></div>
<div class="t" style="left:585px;top:368px;font-size:19px;line-height:22px;color:#000;letter-spacing:-0.171px">Отчет об отправке</div>
<div class="abs" style="left:954.5px;top:374px;width:3px;height:3px;background:#6e6e6e;border-radius:1.5px"></div>
<div class="abs" style="left:954.5px;top:378px;width:3px;height:3px;background:#6e6e6e;border-radius:1.5px"></div>
<div class="abs" style="left:954.5px;top:382px;width:3px;height:3px;background:#6e6e6e;border-radius:1.5px"></div>
<div class="abs" style="left:983px;top:375px;width:9px;height:9px;border:1px solid #222"></div>
<svg style="left:1013px;top:374px" width="10" height="10" viewBox="0 0 10 10"><path d="M0.5 0.5 L9.5 9.5 M9.5 0.5 L0.5 9.5" stroke="#222" stroke-width="1.1"/></svg>
<div class="abs" style="left:585px;top:402px;width:32px;height:32px;border-radius:50%;background:#2a9fd2"></div>
<div class="abs" style="left:599px;top:409px;width:4px;height:4px;border-radius:2px;background:#fff"></div>
<div class="abs" style="left:599px;top:415px;width:4px;height:12px;border-radius:1px;background:#fff"></div>
<div class="t" style="left:627px;top:403px;letter-spacing:-0.404px">По данным таблицы было сформировано 3 электронных писем(а)</div>
<div class="t" style="left:627px;top:419px">по данным 3 строк(и).</div>
<div class="abs" style="left:776px;top:440px;width:52px;height:33px;border:1px solid #f8c524"></div>
<div class="abs" style="left:779px;top:443px;width:46px;height:27px;border:1px solid #9a9a9a;border-radius:3px;background:linear-gradient(#fdfdfd,#e9e9e9);box-shadow:0 1px 1px rgba(0,0,0,0.2)"></div>
<div class="t" style="left:793px;top:448px;font-size:13.5px">OK</div>

<!-- BOTTOM BAR -->
<div id="bottombar" class="abs">
  <div class="abs" style="left:5px;top:5px;width:23px;height:21px;border:1px solid #c4c4c4;border-radius:3px;background:#f3f3f3"></div>
  <svg style="left:10px;top:9px" width="15" height="14" viewBox="0 0 15 14"><g fill="none" stroke="#333" stroke-width="1.1"><path d="M4.5 3.5 L4.5 0.6 L14.4 0.6 L14.4 7.4 L11 7.4"/><rect x="0.6" y="3.6" width="10" height="6.8"/><path d="M5.6 10.4 L5.6 12.6 M3 13 L8.4 13"/></g></svg>
  <div class="t" style="left:34px;top:9px;color:#f0181e;letter-spacing:-0.213px">Текущие вызовы: 13</div>
  <div class="t" style="left:169px;top:9px;color:#f0181e;letter-spacing:-0.357px">Накопленные вызовы: 428</div>
  <div class="t" style="left:1194px;top:11px;font-size:20.5px;line-height:24px;color:#b5b5b5;letter-spacing:-0.290px">Активация Windows</div>
</div>

</body>
</html>
